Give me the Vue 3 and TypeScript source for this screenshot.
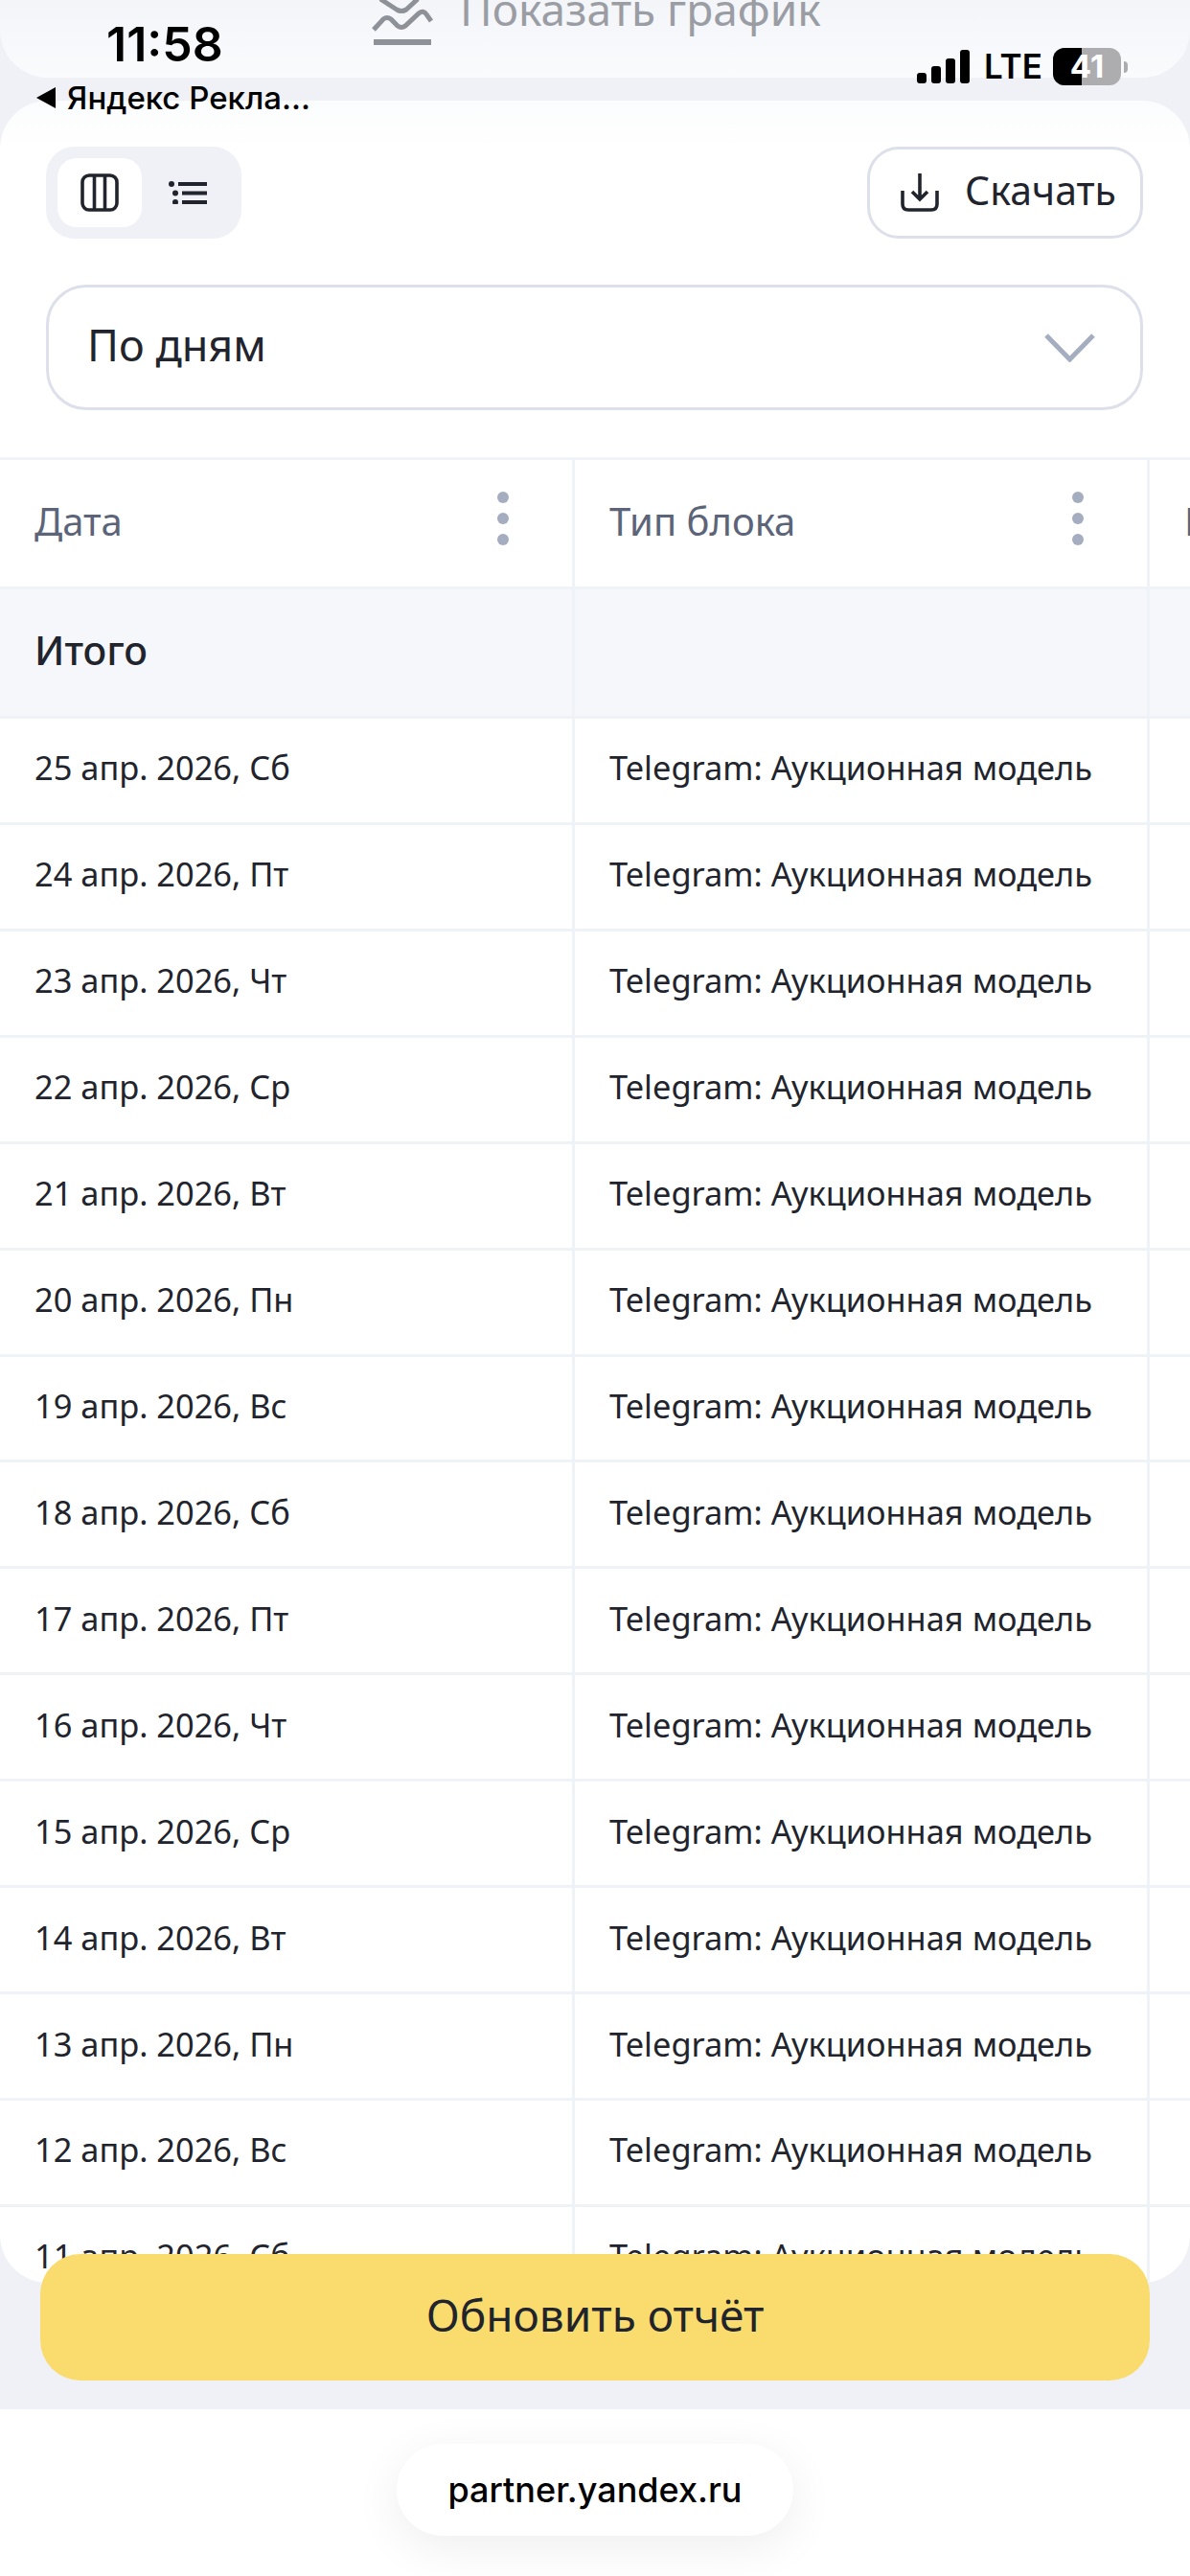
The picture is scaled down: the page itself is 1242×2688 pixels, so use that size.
<script setup lang="ts">
const dates: string[] = [
  '25 апр. 2026, Сб',
  '24 апр. 2026, Пт',
  '23 апр. 2026, Чт',
  '22 апр. 2026, Ср',
  '21 апр. 2026, Вт',
  '20 апр. 2026, Пн',
  '19 апр. 2026, Вс',
  '18 апр. 2026, Сб',
  '17 апр. 2026, Пт',
  '16 апр. 2026, Чт',
  '15 апр. 2026, Ср',
  '14 апр. 2026, Вт',
  '13 апр. 2026, Пн',
  '12 апр. 2026, Вс',
  '11 апр. 2026, Сб',
]
</script>

<template>
  <div class="page">
    <!-- системная строка поверх страницы -->
    <div class="status-time">11:58</div>
    <div class="status-back"><i class="back-arrow"></i>Яндекс Рекла...</div>
    <div class="status-right">
      <svg width="55" height="35" viewBox="0 0 55 35" fill="#000">
        <rect x="0" y="24" width="10" height="11" rx="3" />
        <rect x="15" y="17" width="10" height="18" rx="3" />
        <rect x="30" y="9" width="10" height="26" rx="3" />
        <rect x="45" y="0" width="10" height="35" rx="3" />
      </svg>
      <span class="lte">LTE</span>
      <div class="battery">
        <div class="battery-fill"></div>
        <span class="battery-text">41</span>
      </div>
      <i class="battery-tip"></i>
    </div>

    <div class="top-card">
      <div class="chart-toggle">
        <svg width="60" height="47" viewBox="0 0 60 47" fill="none" stroke="#8f9199">
          <path d="M7 -1 L24 10 Q29 13 34 10 L46 -1" stroke-width="5" />
          <path d="M0 31 L10 20 Q14 17 18 20 L25 27 Q29 30 33 27 L47 14 Q52 10 55 15 L60 22" stroke-width="5" />
          <path d="M0 44 H60" stroke-width="6" />
        </svg>
        <span>Показать график</span>
      </div>
    </div>

    <div class="main-card">
      <div class="toolbar">
        <div class="view-switch">
          <div class="view-item active">
            <svg width="40" height="40" viewBox="0 0 40 40" fill="none" stroke="#21242c" stroke-width="3.6">
              <rect x="2" y="2" width="36" height="36" rx="7" />
              <path d="M14.5 2 V38 M25.5 2 V38" />
            </svg>
          </div>
          <div class="view-item">
            <svg width="40" height="24" viewBox="0 0 40 24" fill="#21242c">
              <circle cx="3" cy="3" r="3" />
              <circle cx="7" cy="12.5" r="3" />
              <circle cx="7" cy="22" r="3" />
              <rect x="10" y="1" width="30" height="4" />
              <rect x="14" y="10.5" width="26" height="4" />
              <rect x="14" y="20" width="26" height="4" />
            </svg>
          </div>
        </div>
        <div class="download">
          <svg width="40" height="40" viewBox="0 0 40 40" fill="none" stroke="#21242c" stroke-width="3.6">
            <path d="M20 0 V26 M12 19 L20 27 L28 19" />
            <path d="M2 18 V32 Q2 38 8 38 H32 Q38 38 38 32 V18" />
          </svg>
          <span>Скачать</span>
        </div>
      </div>

      <div class="select">
        <span>По дням</span>
        <svg width="53" height="30" viewBox="0 0 53 30" fill="none" stroke="#a5adc0" stroke-width="5">
          <path d="M2 2 L26.5 27 L51 2" />
        </svg>
      </div>

      <div class="table">
        <div class="row head">
          <div class="cell">
            <span>Дата</span>
            <svg class="dots" width="12" height="56" viewBox="0 0 12 56" fill="#a5adc0">
              <ellipse cx="6" cy="6" rx="6" ry="6" />
              <ellipse cx="6" cy="28" rx="6" ry="6" />
              <ellipse cx="6" cy="50" rx="6" ry="6" />
            </svg>
          </div>
          <div class="cell">
            <span>Тип блока</span>
            <svg class="dots" width="12" height="56" viewBox="0 0 12 56" fill="#a5adc0">
              <ellipse cx="6" cy="6" rx="6" ry="6" />
              <ellipse cx="6" cy="28" rx="6" ry="6" />
              <ellipse cx="6" cy="50" rx="6" ry="6" />
            </svg>
          </div>
          <div class="cell"><span>Показы</span></div>
        </div>
        <div class="row total">
          <div class="cell">Итого</div>
          <div class="cell"></div>
          <div class="cell"></div>
        </div>
        <div v-for="d in dates" :key="d" class="row">
          <div class="cell">{{ d }}</div>
          <div class="cell">Telegram: Аукционная модель</div>
          <div class="cell"></div>
        </div>
      </div>
    </div>

    <div class="update-btn">Обновить отчёт</div>

    <div class="footer">
      <div class="url-pill">partner.yandex.ru</div>
    </div>
  </div>
</template>

<style scoped>
.page {
  position: relative;
  width: 1242px;
  height: 2688px;
  overflow: hidden;
  background: #eff1f6;
  font-family: "Noto Sans", "Open Sans", sans-serif;
  color: #21242c;
  display: flex;
  flex-direction: column;
}

/* status bar */
.status-time {
  position: absolute;
  left: 111px;
  top: 18px;
  font: 600 50px/56px Inter, "Liberation Sans", sans-serif;
  color: #000;
  z-index: 3;
}
.status-back {
  position: absolute;
  left: 38px;
  top: 84px;
  display: flex;
  align-items: center;
  gap: 12px;
  font: 500 33px/36px Inter, "Liberation Sans", sans-serif;
  color: #000;
  z-index: 3;
}
.back-arrow {
  width: 0;
  height: 0;
  border-top: 11px solid transparent;
  border-bottom: 11px solid transparent;
  border-right: 20px solid #000;
}
.status-right {
  position: absolute;
  left: 957px;
  top: 50px;
  display: flex;
  align-items: center;
  z-index: 3;
}
.lte {
  margin-left: 15px;
  font: 600 35px/35px Inter, "Liberation Sans", sans-serif;
  color: #000;
  width: 72px;
}
.battery {
  position: relative;
  width: 71px;
  height: 39px;
  border-radius: 12px;
  background: #adadaf;
  overflow: hidden;
  display: flex;
  align-items: center;
  justify-content: center;
}
.battery-fill {
  position: absolute;
  left: 0;
  top: 0;
  bottom: 0;
  width: 30px;
  background: #000;
}
.battery-text {
  position: relative;
  font: 700 33px/39px Inter, "Liberation Sans", sans-serif;
  color: #fff;
}
.battery-tip {
  margin-left: 3px;
  width: 4px;
  height: 12px;
  border-radius: 0 4px 4px 0;
  background: #adadaf;
}

/* верхний блок */
.top-card {
  height: 81px;
  flex-shrink: 0;
  border-radius: 0 0 50px 50px;
  background: linear-gradient(#f3f5f9, #fafbfd);
  overflow: hidden;
}
.chart-toggle {
  display: flex;
  align-items: flex-start;
  gap: 30px;
  margin-left: 390px;
  color: #9b9da4;
  font-size: 46px;
  line-height: 46px;
}
.chart-toggle svg {
  overflow: visible;
}
.chart-toggle span {
  margin-top: -14px;
}

/* основная карточка */
.main-card {
  margin-top: 24px;
  height: 2277px;
  flex-shrink: 0;
  border-radius: 50px;
  background: linear-gradient(#fbfcfd, #fff 50px);
  overflow: hidden;
  padding-top: 48px;
  box-sizing: border-box;
}
.toolbar {
  display: flex;
  justify-content: space-between;
  padding: 0 49px 0 48px;
}
.view-switch {
  display: flex;
  align-items: center;
  width: 204px;
  height: 96px;
  padding: 12px;
  box-sizing: border-box;
  border-radius: 30px;
  background: #eff1f6;
}
.view-item {
  width: 90px;
  height: 72px;
  border-radius: 20px;
  display: flex;
  align-items: center;
  justify-content: center;
}
.view-item.active {
  background: #fff;
}
.view-item + .view-item {
  padding-left: 5px;
}
.download {
  width: 288px;
  height: 96px;
  box-sizing: border-box;
  border: 3px solid #dde0ea;
  border-radius: 33px;
  display: flex;
  align-items: center;
  gap: 27px;
  padding-left: 32px;
  font-size: 41px;
}
.download span {
  margin-bottom: 6px;
}
.select {
  margin: 48px 49px 0 48px;
  height: 131px;
  box-sizing: border-box;
  border: 3px solid #dde0ea;
  border-radius: 42px;
  display: flex;
  align-items: center;
  justify-content: space-between;
  padding: 0 47px 0 40px;
  font-size: 45px;
}
.select span {
  margin-bottom: 6px;
}

/* таблица */
.table {
  margin-top: 49px;
  border-top: 3px solid #eff2f6;
  overflow: hidden;
}
.row {
  display: grid;
  grid-template-columns: 600px 600px 600px;
  height: 110.93px;
  box-sizing: border-box;
  border-bottom: 3px solid #eff2f6;
  font-size: 34.4px;
}
.cell {
  display: flex;
  align-items: center;
  justify-content: space-between;
  box-sizing: border-box;
  padding: 0 66px 6px 36px;
  border-right: 3px solid #eff2f6;
  white-space: nowrap;
}
.head,
.total {
  height: 135px;
  font-size: 40px;
}
.head {
  color: #5b6478;
}
.total {
  background: #f5f7fb;
  font-size: 41px;
  font-weight: 500;
  color: #21242c;
}
.dots {
  margin-bottom: 4px;
}

/* кнопка поверх таблицы */
.update-btn {
  position: absolute;
  left: 42px;
  top: 2352px;
  width: 1158px;
  height: 132px;
  padding-bottom: 6px;
  box-sizing: border-box;
  border-radius: 42px;
  background: #f9dc6d;
  display: flex;
  align-items: center;
  justify-content: center;
  font-size: 46px;
}

/* адресная строка */
.footer {
  margin-top: 132px;
  flex: 1;
  background: #fff;
  display: flex;
  justify-content: center;
  padding-top: 36px;
}
.url-pill {
  width: 414px;
  height: 96px;
  border-radius: 48px;
  background: #fff;
  box-shadow: 0 12px 50px rgba(0, 0, 0, 0.07);
  display: flex;
  align-items: center;
  justify-content: center;
  font: 500 36px/96px Inter, "Liberation Sans", sans-serif;
  color: #000;
}
</style>

<style>
html,
body {
  margin: 0;
  background: #fff;
}
</style>
